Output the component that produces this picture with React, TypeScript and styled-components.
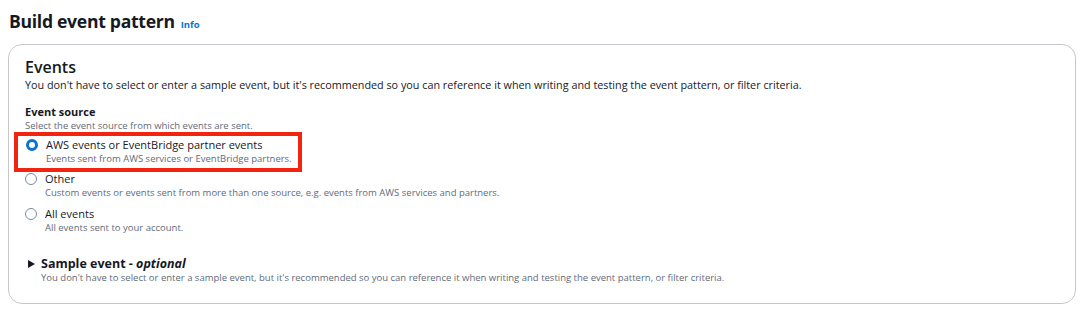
import styled, { createGlobalStyle } from "styled-components"

const GlobalStyle = createGlobalStyle`
  body {
    margin: 0;
    background: #fff;
    font-family: "Open Sans", "Noto Sans", Arial, sans-serif;
    color: #16191f;
  }
`

const Page = styled.div`
  padding: 8px 10px 0 8px;
`

const Header = styled.div`
  display: flex;
  align-items: baseline;
  gap: 6px;
  padding-left: 1px;
`

const Title = styled.h2`
  margin: 0;
  font-size: 17.6px;
  line-height: 26px;
  font-weight: 700;
  letter-spacing: -0.3px;
`

const InfoLink = styled.a`
  font-size: 9.5px;
  font-weight: 700;
  color: #0972d3;
  text-decoration: none;
`

const Card = styled.div`
  margin-top: 10px;
  border: 1px solid #c6c6cd;
  border-radius: 14px;
  padding: 12px 16px 14px 16px;
  height: 232px;
  box-sizing: content-box;
`

const SectionTitle = styled.h3`
  margin: 0;
  font-size: 16px;
  line-height: 20px;
  font-weight: 600;
`

const Hint = styled.div`
  font-size: 9.5px;
  line-height: 14px;
  color: #5f6b7a;
`

const Description = styled.div`
  font-size: 10.8px;
  line-height: 16px;
  color: #16191f;
`

const Field = styled.div`
  margin-top: 11px;
`

const FieldLabel = styled.div`
  font-size: 11px;
  line-height: 15px;
  font-weight: 700;
`

const Options = styled.div`
  display: flex;
  flex-direction: column;
  gap: 6px;
  margin-top: -1px;
`

const Highlight = styled.div<{ $on?: boolean }>`
  margin: ${(p) => (p.$on ? "0 0 -7px -11px" : "0")};
  padding: ${(p) => (p.$on ? "1px 6px 2px 8px" : "0")};
  border: ${(p) => (p.$on ? "4px solid #f2240f" : "none")};
  width: fit-content;
`

const Option = styled.label`
  display: flex;
  align-items: flex-start;
  gap: 8px;
  cursor: pointer;
`

const Radio = styled.span<{ $checked?: boolean }>`
  flex: none;
  width: 12px;
  height: 12px;
  margin-top: 2px;
  border-radius: 50%;
  box-sizing: border-box;
  border: ${(p) => (p.$checked ? "3.5px solid #0972d3" : "1.5px solid #7d8998")};
  background: #fff;
`

const OptionText = styled.div`
  display: flex;
  flex-direction: column;
`

const OptionLabel = styled.span`
  font-size: 11px;
  line-height: 15px;
`

const Expander = styled.div`
  margin-top: 21px;
  display: flex;
  gap: 6px;
  padding-left: 3px;
`

const Caret = styled.span`
  width: 0;
  height: 0;
  margin-top: 4px;
  border-top: 4px solid transparent;
  border-bottom: 4px solid transparent;
  border-left: 7px solid #16191f;
`

const ExpanderTitle = styled.div`
  font-size: 12.5px;
  line-height: 15px;
  font-weight: 700;

  em {
    font-style: italic;
  }
`

const options = [
  {
    label: "AWS events or EventBridge partner events",
    hint: "Events sent from AWS services or EventBridge partners.",
    checked: true,
  },
  {
    label: "Other",
    hint: "Custom events or events sent from more than one source, e.g. events from AWS services and partners.",
  },
  {
    label: "All events",
    hint: "All events sent to your account.",
  },
]

const desc =
  "You don't have to select or enter a sample event, but it's recommended so you can reference it when writing and testing the event pattern, or filter criteria."

export default function App() {
  return (
    <Page>
      <GlobalStyle />
      <Header>
        <Title>Build event pattern</Title>
        <InfoLink href="#">Info</InfoLink>
      </Header>
      <Card>
        <SectionTitle>Events</SectionTitle>
        <Description>{desc}</Description>
        <Field>
          <FieldLabel>Event source</FieldLabel>
          <Hint>Select the event source from which events are sent.</Hint>
          <Options>
            {options.map((o) => (
              <Highlight key={o.label} $on={o.checked}>
                <Option>
                  <Radio $checked={o.checked} />
                  <OptionText>
                    <OptionLabel>{o.label}</OptionLabel>
                    <Hint>{o.hint}</Hint>
                  </OptionText>
                </Option>
              </Highlight>
            ))}
          </Options>
        </Field>
        <Expander>
          <Caret />
          <div>
            <ExpanderTitle>
              Sample event - <em>optional</em>
            </ExpanderTitle>
            <Hint>{desc}</Hint>
          </div>
        </Expander>
      </Card>
    </Page>
  )
}
